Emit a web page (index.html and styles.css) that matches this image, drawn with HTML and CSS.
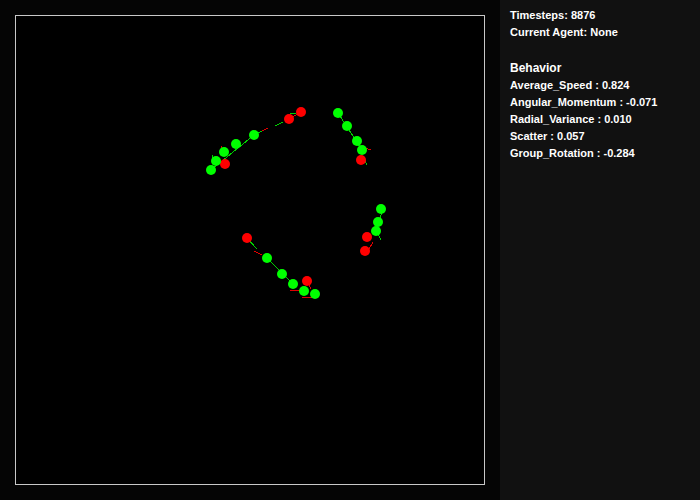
FILE: index.html
```html
<!DOCTYPE html>
<html>
<head>
<meta charset="utf-8">
<link rel="stylesheet" href="styles.css">
</head>
<body>
<div class="app">
  <div class="stage">
    <div class="arena">
      <svg class="field" width="468" height="468" viewBox="16 16 468 468" shape-rendering="crispEdges">
        <g class="trails">
          <!-- group top-left -->
          <line x1="211" y1="170" x2="254" y2="135" stroke="#00d000"/>
          <line x1="254" y1="135" x2="262" y2="131" stroke="#00d000"/>
          <line x1="262" y1="131" x2="268" y2="128" stroke="#e00000"/>
          <line x1="275" y1="126" x2="283" y2="122" stroke="#00d000"/>
          <line x1="289" y1="119" x2="301" y2="112" stroke="#e00000"/>
          <line x1="290" y1="113" x2="296" y2="113" stroke="#00d000"/>
          <line x1="221" y1="146" x2="221" y2="151" stroke="#e00000"/>
          <line x1="212" y1="155" x2="212" y2="159" stroke="#00d000"/>
          <!-- group top-right -->
          <line x1="338" y1="113" x2="362" y2="150" stroke="#00d000"/>
          <line x1="362" y1="147" x2="371" y2="150" stroke="#e00000"/>
          <line x1="363" y1="156" x2="367" y2="165" stroke="#00d000"/>
          <!-- group right -->
          <line x1="382" y1="212" x2="376" y2="231" stroke="#00d000"/>
          <line x1="378" y1="234" x2="381" y2="240" stroke="#00d000"/>
          <line x1="373" y1="242" x2="369" y2="249" stroke="#e00000"/>
          <!-- group bottom -->
          <line x1="247" y1="238" x2="257" y2="249" stroke="#00d000"/>
          <line x1="254" y1="251" x2="262" y2="255" stroke="#e00000"/>
          <line x1="267" y1="258" x2="293" y2="284" stroke="#00d000"/>
          <line x1="290" y1="290" x2="303" y2="291" stroke="#e00000"/>
          <line x1="302" y1="298" x2="313" y2="297" stroke="#e00000"/>
          <line x1="307" y1="281" x2="311" y2="289" stroke="#e00000"/>
        </g>
        <g class="agents" shape-rendering="auto">
          <circle cx="301" cy="112" r="5" fill="#ff0000"/>
          <circle cx="289" cy="119" r="5" fill="#ff0000"/>
          <circle cx="254" cy="135" r="5" fill="#00ff00"/>
          <circle cx="236" cy="144" r="5" fill="#00ff00"/>
          <circle cx="225" cy="164" r="5" fill="#ff0000"/>
          <circle cx="224" cy="152" r="5" fill="#00ff00"/>
          <circle cx="216" cy="161" r="5" fill="#00ff00"/>
          <circle cx="211" cy="170" r="5" fill="#00ff00"/>

          <circle cx="338" cy="113" r="5" fill="#00ff00"/>
          <circle cx="347" cy="126" r="5" fill="#00ff00"/>
          <circle cx="357" cy="141" r="5" fill="#00ff00"/>
          <circle cx="361" cy="160" r="5" fill="#ff0000"/>
          <circle cx="362" cy="150" r="5" fill="#00ff00"/>

          <circle cx="381" cy="209" r="5" fill="#00ff00"/>
          <circle cx="378" cy="222" r="5" fill="#00ff00"/>
          <circle cx="367" cy="237" r="5" fill="#ff0000"/>
          <circle cx="365" cy="251" r="5" fill="#ff0000"/>
          <circle cx="376" cy="231" r="5" fill="#00ff00"/>

          <circle cx="247" cy="238" r="5" fill="#ff0000"/>
          <circle cx="267" cy="258" r="5" fill="#00ff00"/>
          <circle cx="282" cy="274" r="5" fill="#00ff00"/>
          <circle cx="307" cy="281" r="5" fill="#ff0000"/>
          <circle cx="293" cy="284" r="5" fill="#00ff00"/>
          <circle cx="304" cy="291" r="5" fill="#00ff00"/>
          <circle cx="315" cy="294" r="5" fill="#00ff00"/>
        </g>
      </svg>
    </div>
  </div>
  <aside class="panel">
    <div class="line">Timesteps: 8876</div>
    <div class="line">Current Agent: None</div>
    <div class="heading">Behavior</div>
    <div class="line">Average_Speed : 0.824</div>
    <div class="line">Angular_Momentum : -0.071</div>
    <div class="line">Radial_Variance : 0.010</div>
    <div class="line">Scatter : 0.057</div>
    <div class="line">Group_Rotation : -0.284</div>
  </aside>
</div>
</body>
</html>
```

FILE: styles.css
```css
html, body {
  margin: 0;
  padding: 0;
  background: #050505;
}
.app {
  display: flex;
  width: 700px;
  height: 500px;
}
.stage {
  width: 500px;
  height: 500px;
  padding: 15px;
  box-sizing: border-box;
  background: #050505;
}
.arena {
  width: 468px;
  height: 468px;
  border: 1px solid #c8c8c8;
  background: #000;
}
.field {
  display: block;
}
.panel {
  width: 200px;
  height: 500px;
  box-sizing: border-box;
  padding: 7px 0 0 10px;
  background: #111111;
  color: #ffffff;
  font-family: "Liberation Sans", Arial, sans-serif;
  font-weight: bold;
}
.line {
  font-size: 11px;
  line-height: 17px;
  white-space: nowrap;
}
.heading {
  font-size: 12px;
  line-height: 18px;
  margin-top: 18px;
}
```
